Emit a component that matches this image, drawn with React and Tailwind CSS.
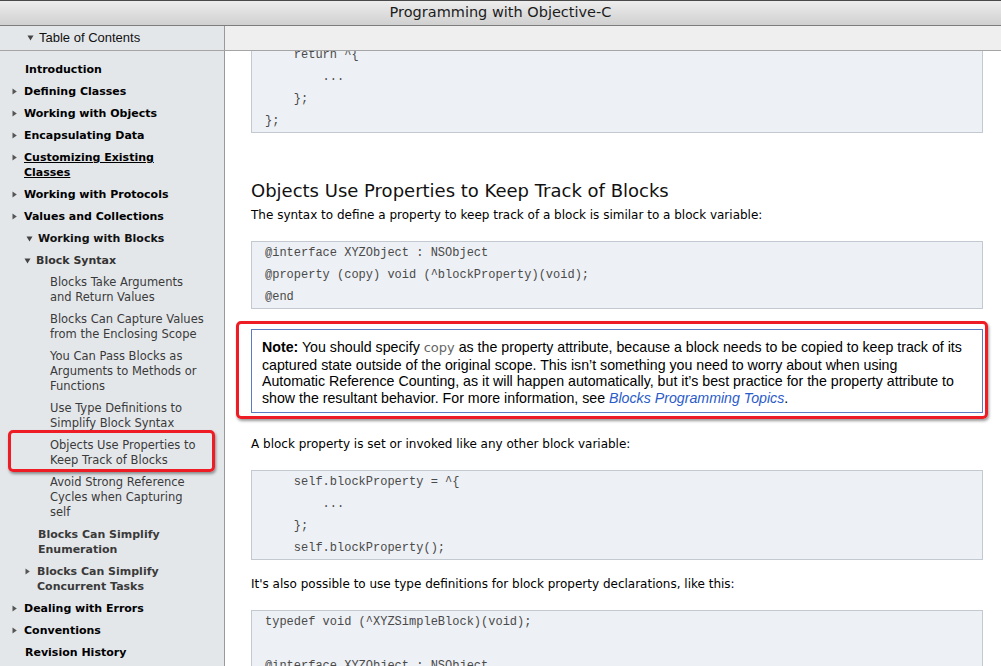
import React from "react";

const Tri = ({ down, className = "" }) =>
  down ? (
    <svg width="7" height="6" viewBox="0 0 7 6" className={className}>
      <polygon points="0.5,0.5 6.5,0.5 3.5,5.5" fill="#444" />
    </svg>
  ) : (
    <svg width="5" height="7" viewBox="0 0 5 7" className={className}>
      <polygon points="0.5,0.5 4.8,3.5 0.5,6.5" fill="#555" />
    </svg>
  );

// sidebar entries, classes written out in full
const toc = [
  { lines: ["Introduction"], box: "pl-[25px]", text: "font-bold text-[11px] text-black" },
  { lines: ["Defining Classes"], tri: "right", box: "pl-[12px]", text: "font-bold text-[11px] text-black" },
  { lines: ["Working with Objects"], tri: "right", box: "pl-[12px]", text: "font-bold text-[11px] text-black" },
  { lines: ["Encapsulating Data"], tri: "right", box: "pl-[12px]", text: "font-bold text-[11px] text-black" },
  { lines: ["Customizing Existing", "Classes"], tri: "right", box: "pl-[12px]", text: "font-bold text-[11px] text-black underline" },
  { lines: ["Working with Protocols"], tri: "right", box: "pl-[12px]", text: "font-bold text-[11px] text-black" },
  { lines: ["Values and Collections"], tri: "right", box: "pl-[12px]", text: "font-bold text-[11px] text-black" },
  { lines: ["Working with Blocks"], tri: "down", box: "pl-[26px]", text: "font-bold text-[11px] text-[#111]" },
  { lines: ["Block Syntax"], tri: "down", box: "pl-[24px]", text: "font-bold text-[11px] text-[#333]" },
  { lines: ["Blocks Take Arguments", "and Return Values"], box: "pl-[50px]", text: "text-[11.5px] text-[#3a3a3a]" },
  { lines: ["Blocks Can Capture Values", "from the Enclosing Scope"], box: "pl-[50px]", text: "text-[11.5px] text-[#3a3a3a]" },
  { lines: ["You Can Pass Blocks as", "Arguments to Methods or", "Functions"], box: "pl-[50px]", text: "text-[11.5px] text-[#3a3a3a]" },
  { lines: ["Use Type Definitions to", "Simplify Block Syntax"], box: "pl-[50px]", text: "text-[11.5px] text-[#3a3a3a]" },
  { lines: ["Objects Use Properties to", "Keep Track of Blocks"], box: "pl-[50px]", text: "text-[11.5px] text-[#3a3a3a]", marked: true },
  { lines: ["Avoid Strong Reference", "Cycles when Capturing", "self"], box: "pl-[50px]", text: "text-[11.5px] text-[#3a3a3a]" },
  { lines: ["Blocks Can Simplify", "Enumeration"], box: "pl-[38px]", text: "font-bold text-[11px] text-[#3a3a3a]" },
  { lines: ["Blocks Can Simplify", "Concurrent Tasks"], tri: "right", box: "pl-[25px]", text: "font-bold text-[11px] text-[#3a3a3a]" },
  { lines: ["Dealing with Errors"], tri: "right", box: "pl-[12px]", text: "font-bold text-[11px] text-black" },
  { lines: ["Conventions"], tri: "right", box: "pl-[12px]", text: "font-bold text-[11px] text-black" },
  { lines: ["Revision History"], box: "pl-[25px]", text: "font-bold text-[11px] text-black" },
];

const TocItem = ({ item }) => (
  <div className={`relative flex ${item.box}`}>
    {item.tri && (
      <div className="w-[12px] h-[15px] flex items-center shrink-0">
        <Tri down={item.tri === "down"} />
      </div>
    )}
    <div className={`leading-[15px] ${item.text}`}>
      {item.lines.map((l, i) => (
        <div key={i}>{l}</div>
      ))}
    </div>
    {item.marked && (
      <div className="absolute left-[8px] right-[9px] top-[-8px] bottom-[-4px] border-[3px] border-[#ee1c24] rounded-[5px] shadow-[1px_2px_3px_rgba(0,0,0,0.4)]" />
    )}
  </div>
);

const Code = ({ lines, className = "" }) => (
  <div
    className={`border border-[#c3c9d0] bg-[#edf0f4] pl-[13px] font-['Liberation_Mono',monospace] text-[12px] leading-[22px] text-[#4a4a4a] whitespace-pre ${className}`}
  >
    {lines.map((l, i) => (
      <div key={i} className="h-[22px]">
        {l}
      </div>
    ))}
  </div>
);

export default function App() {
  return (
    <div className="w-[1001px] h-[666px] overflow-hidden flex flex-col bg-white font-['DejaVu_Sans',sans-serif]">
      {/* window title */}
      <div className="h-[26px] shrink-0 border-t border-t-[#4a4a4a] border-b border-b-[#7d7d7d] bg-gradient-to-b from-[#ededed] to-[#d0d0d0] flex items-center justify-center text-[14.5px] text-[#1c1c1c]">
        Programming with Objective-C
      </div>

      {/* toolbar row */}
      <div className="h-[25px] shrink-0 flex border-b border-[#a5a5a5]">
        <div className="w-[225px] shrink-0 border-r border-[#999] bg-[#e4e7ea] flex items-center pl-[27px] gap-[5px]">
          <Tri down />
          <span className="font-['Liberation_Sans',sans-serif] text-[13px] text-[#111]">Table of Contents</span>
        </div>
        <div className="flex-1 bg-[#efefef]" />
      </div>

      <div className="flex-1 min-h-0 flex">
        {/* sidebar */}
        <div className="w-[225px] shrink-0 border-r border-[#999] bg-[#e4e7ea] pt-[11px] flex flex-col gap-[7px]">
          {toc.map((item, i) => (
            <TocItem key={i} item={item} />
          ))}
        </div>

        {/* document */}
        <div className="flex-1 min-w-0 overflow-hidden pl-[26px] pr-[18px] text-[12px] text-black">
          <Code className="-mt-[8px]" lines={["    return ^{", "        ...", "    };", "};"]} />

          <h2 className="mt-[46px] text-[18px] leading-[24px] font-normal text-[#111]">
            Objects Use Properties to Keep Track of Blocks
          </h2>
          <p className="mt-[2px] leading-[20px]">
            The syntax to define a property to keep track of a block is similar to a block variable:
          </p>

          <Code
            className="mt-[16px]"
            lines={["@interface XYZObject : NSObject", "@property (copy) void (^blockProperty)(void);", "@end"]}
          />

          <div className="relative mt-[20px] border border-[#5b7cc0] pt-[9px] pb-[6px] pl-[10px] font-['Liberation_Sans',sans-serif] text-[14.2px] leading-[16.5px] text-black whitespace-nowrap">
            <div>
              <span className="font-bold">Note:</span> You should specify{" "}
              <span className="font-['DejaVu_Sans',sans-serif] text-[13px] text-[#666]">copy</span> as the property
              attribute, because a block needs to be copied to keep track of its
            </div>
            <div>
              captured state outside of the original scope. This isn’t something you need to worry about when using
            </div>
            <div>
              Automatic Reference Counting, as it will happen automatically, but it’s best practice for the property
              attribute to
            </div>
            <div>
              show the resultant behavior. For more information, see{" "}
              <span className="italic text-[#2a5bc9]">Blocks Programming Topics</span>.
            </div>
            <div className="absolute left-[-16px] right-[-6px] top-[-9px] bottom-[-7px] border-[3px] border-[#ee1c24] rounded-[5px] shadow-[1px_2px_3px_rgba(0,0,0,0.4)]" />
          </div>

          <p className="mt-[21px] leading-[20px]">A block property is set or invoked like any other block variable:</p>

          <Code
            className="mt-[16px]"
            lines={["    self.blockProperty = ^{", "        ...", "    };", "    self.blockProperty();"]}
          />

          <p className="mt-[14px] leading-[20px]">
            It's also possible to use type definitions for block property declarations, like this:
          </p>

          <Code
            className="mt-[16px]"
            lines={["typedef void (^XYZSimpleBlock)(void);", " ", "@interface XYZObject : NSObject", "@property (copy) XYZSimpleBlock blockProperty;"]}
          />
        </div>
      </div>
    </div>
  );
}
